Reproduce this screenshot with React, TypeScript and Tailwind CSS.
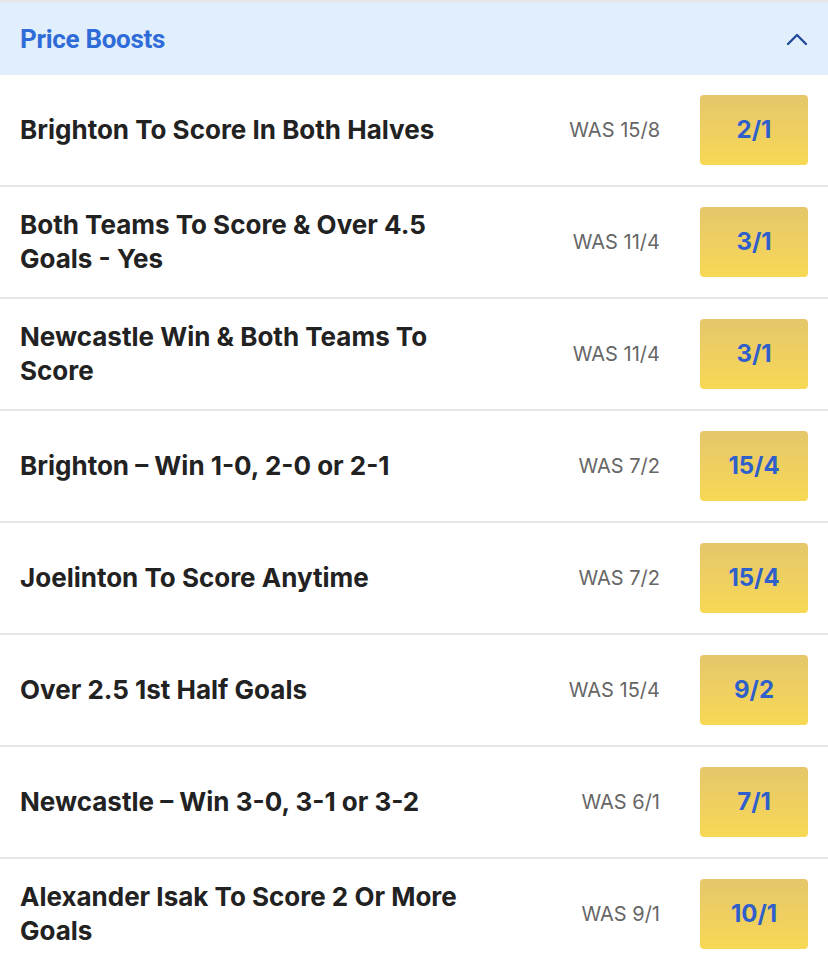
import React from "react";

const rows = [
  { t: "Brighton To Score In Both Halves", was: "15/8", odds: "2/1" },
  { t: "Both Teams To Score & Over 4.5 Goals - Yes", was: "11/4", odds: "3/1" },
  { t: "Newcastle Win & Both Teams To Score", was: "11/4", odds: "3/1" },
  { t: "Brighton – Win 1-0, 2-0 or 2-1", was: "7/2", odds: "15/4" },
  { t: "Joelinton To Score Anytime", was: "7/2", odds: "15/4" },
  { t: "Over 2.5 1st Half Goals", was: "15/4", odds: "9/2" },
  { t: "Newcastle – Win 3-0, 3-1 or 3-2", was: "6/1", odds: "7/1" },
  { t: "Alexander Isak To Score 2 Or More Goals", was: "9/1", odds: "10/1" },
];

export default function App() {
  return (
    <div className="w-[828px] h-[964px] overflow-hidden bg-white" style={{ fontFamily: "Inter, 'Liberation Sans', sans-serif" }}>
      <div className="border-t-[3px] border-[#e4e7ec]">
        <div className="h-[72px] bg-[#e1eefb] flex items-center justify-between pl-[20px] pr-[20px]">
          <span className="text-[26px] font-bold text-[#2f6bd8] tracking-[-0.3px]" style={{ fontFamily: "Roboto, 'Liberation Sans', sans-serif" }}>
            Price Boosts
          </span>
          <svg width="22" height="14" viewBox="0 0 22 14">
            <path d="M2 12 L11 3 L20 12" fill="none" stroke="#244a9a" strokeWidth="2.4" strokeLinecap="round" strokeLinejoin="round" />
          </svg>
        </div>
        {rows.map((r, i) => (
          <div key={i} className="h-[112px] border-b-2 border-[#e6e6e6] flex items-center pl-[20px] pr-[20px]">
            <div className="flex-1 min-w-0">
              <div className="max-w-[460px] text-[26px] leading-[34px] font-bold text-[#222222]">{r.t}</div>
            </div>
            <div className="text-[20px] text-[#666666] mr-[40px]">WAS {r.was}</div>
            <div className="w-[108px] h-[70px] rounded-[4px] bg-gradient-to-b from-[#e5c66a] to-[#f8d854] flex items-center justify-center">
              <span className="text-[24px] font-bold text-[#2e5fcb]">{r.odds}</span>
            </div>
          </div>
        ))}
      </div>
    </div>
  );
}
